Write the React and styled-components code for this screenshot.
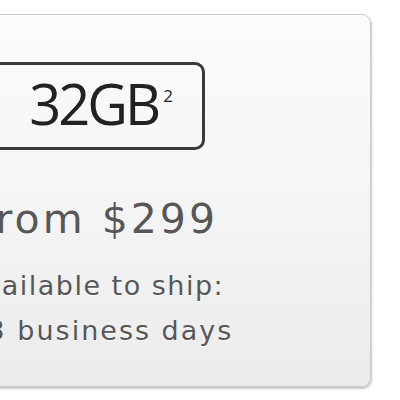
import React from "react";
import styled, { createGlobalStyle } from "styled-components";

const Global = createGlobalStyle`
  html, body { margin: 0; padding: 0; background: #ffffff; }
  body { width: 400px; height: 400px; overflow: hidden; }
`;

const Page = styled.div`
  padding-top: 14px;
  margin-left: -80px;
  width: 451px;
`;

const Card = styled.div`
  height: 371px;
  border: 1px solid #cdcdcd;
  border-radius: 9px;
  background: linear-gradient(to bottom, #fbfbfb 0%, #f5f5f5 50%, #ebebeb 100%);
  box-shadow: 1px 2px 2px rgba(0, 0, 0, 0.22), inset 1px 1px 0 #ffffff;
  display: flex;
  overflow: hidden;
`;

const Column = styled.div`
  width: 330px;
  margin-left: 9px;
  padding-top: 47px;
  display: flex;
  flex-direction: column;
  align-items: center;
`;

const CapacityBox = styled.div`
  align-self: flex-start;
  margin-left: 45px;
  width: 230px;
  height: 88px;
  box-sizing: border-box;
  border: 3px solid #3a3a3a;
  border-radius: 10px;
  padding-right: 29px;
  padding-bottom: 6px;
  text-align: right;
  font-family: "Open Sans", "Liberation Sans", sans-serif;
  font-size: 56px;
  font-weight: 500;
  line-height: 76px;
  color: #222222;
  white-space: nowrap;
`;

const Capacity = styled.span`
  letter-spacing: -3px;
`;

const Sup = styled.span`
  font-size: 17px;
  line-height: 0;
  letter-spacing: 0;
  vertical-align: 23px;
  margin-left: 5px;
`;

const Price = styled.div`
  margin-top: 46px;
  text-align: center;
  font-family: "DejaVu Sans", "Liberation Sans", sans-serif;
  font-size: 41px;
  line-height: 46px;
  color: #575757;
  letter-spacing: 3px;
  text-shadow: 0 1px 0 #ffffff;
  white-space: nowrap;
`;

const Note = styled.div`
  margin-top: ${(p) => p.$gap}px;
  text-align: center;
  font-family: "DejaVu Sans", "Liberation Sans", sans-serif;
  font-size: 27px;
  line-height: 45px;
  color: #575757;
  letter-spacing: ${(p) => p.$spacing}px;
  text-shadow: 0 1px 0 #ffffff;
  white-space: nowrap;
`;

export default function App() {
  return (
    <>
      <Global />
      <Page>
        <Card>
          <Column>
            <CapacityBox>
              <Capacity>32GB</Capacity>
              <Sup>2</Sup>
            </CapacityBox>
            <Price>From $299</Price>
            <Note $gap={21} $spacing={1.5}>Available to ship:</Note>
            <Note $gap={0} $spacing={2}>1-3 business days</Note>
          </Column>
        </Card>
      </Page>
    </>
  );
}
